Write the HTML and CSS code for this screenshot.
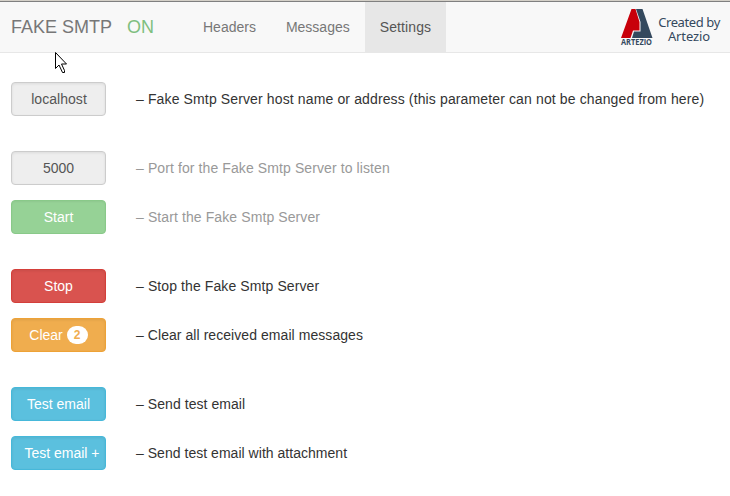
FILE: index.html
```html
<!DOCTYPE html>
<html lang="en">
<head>
<meta charset="utf-8">
<title>Fake SMTP - Settings</title>
<link rel="stylesheet" href="styles.css">
</head>
<body>
<header class="navbar">
  <div class="brand">FAKE SMTP</div>
  <div class="status">ON</div>
  <nav class="nav">
    <a class="nav-item">Headers</a>
    <a class="nav-item">Messages</a>
    <a class="nav-item active">Settings</a>
  </nav>
  <div class="credit">
    <svg class="logo" width="34" height="38" viewBox="0 0 34 38">
      <path fill="#c8000a" d="M11.500 1h4L19.500 14v8.500H13L10.500 30H1z"/>
      <path fill="#34495e" d="M16 1h6.500l10 29H12l2-6.500h6.500V14z"/>
      <text class="logo-text" x="1" y="37.300" textLength="31" lengthAdjust="spacingAndGlyphs">ARTEZIO</text>
    </svg>
    <div class="credit-text"><span>Created by</span><span class="company">Artezio</span></div>
  </div>
</header>
<main class="settings">
  <div class="row gap"><div class="btn field host">localhost</div><p class="spaced">– Fake Smtp Server host name or address (this parameter can not be changed from here)</p></div>
  <div class="row muted"><div class="btn field">5000</div><p class="spaced-md">– Port for the Fake Smtp Server to listen</p></div>
  <div class="row gap muted"><div class="btn success">Start</div><p class="spaced-md">– Start the Fake Smtp Server</p></div>
  <div class="row"><div class="btn danger">Stop</div><p class="spaced-md">– Stop the Fake Smtp Server</p></div>
  <div class="row gap"><div class="btn warning">Clear <span class="badge">2</span></div><p class="spaced-sm">– Clear all received email messages</p></div>
  <div class="row"><div class="btn info">Test email</div><p class="spaced-sm">– Send test email</p></div>
  <div class="row"><div class="btn info plus">Test email +</div><p class="spaced-xs">– Send test email with attachment</p></div>
</main>
<svg class="cursor" width="13" height="22" viewBox="0 0 13 22">
  <path fill="#fff" stroke="#000" d="M.5.500v16l3.500-3.500 3.500 7.500h2v-2l-3-6.500h5z"/>
</svg>
</body>
</html>
```
FILE: styles.css
```css
* { box-sizing: border-box; }
body {
  margin: 0;
  height: 496px;
  overflow: hidden;
  background: #fff;
  border-top: 1px solid #d4d0c8;
  color: #333;
  font: 14px/20px "Liberation Sans", Arial, sans-serif;
}
.navbar {
  display: flex;
  height: 52px;
  padding-left: 11px;
  background: #f8f8f8;
  border-top: 1px solid #808080;
  border-bottom: 1px solid #e7e7e7;
  color: #777;
  line-height: 50px;
}
.brand, .status { font-size: 18px; white-space: nowrap; }
.brand { width: 116px; }
.status { width: 61px; color: #7fbf7f; }
.nav { display: flex; }
.nav-item { padding: 0 15px; }
.nav-item.active { width: 81px; background: #e7e7e7; color: #555; letter-spacing: .1px; }
.credit {
  display: flex;
  margin-left: auto;
  width: 110px;
  padding-top: 6px;
}
.logo { flex: none; }
.logo-text { font: bold 8.5px "Open Sans", sans-serif; fill: #34495e; }
.credit-text {
  display: flex;
  flex-direction: column;
  align-items: center;
  width: 64px;
  margin: 7px 0 0 3px;
  color: #34495e;
  font: 13px/14px "Noto Sans", sans-serif;
  letter-spacing: -0.4px;
  white-space: nowrap;
}
.company { letter-spacing: -0.1px; }
.settings { padding: 29px 11px 0; }
.row { display: flex; align-items: center; height: 34px; margin-bottom: 15px; }
.row.gap { margin-bottom: 35px; }
.row p { margin: 0 0 0 30px; white-space: nowrap; }
.row.muted p { color: #999; }
.row .spaced { letter-spacing: .13px; }
.row .spaced-md { letter-spacing: .1px; }
.row .spaced-sm { letter-spacing: .06px; }
.row .spaced-xs { letter-spacing: .03px; }
.btn {
  width: 95px;
  height: 34px;
  padding-top: 6px;
  border: 1px solid;
  border-radius: 4px;
  color: #fff;
  text-align: center;
  white-space: nowrap;
  box-shadow: inset 0 1px 3px rgba(0, 0, 0, .08);
}
.field { background: #eee; border-color: #ccc; color: #555; }
.host { padding-left: 1px; letter-spacing: .05px; }
.success { background: #96d296; border-color: #89c989; box-shadow: inset 0 1px 2px rgba(0, 0, 0, .05); }
.danger { background: #d9534f; border-color: #d43f3a; }
.warning { background: #f0ad4e; border-color: #eea236; }
.info { background: #5bc0de; border-color: #46b8da; }
.plus { padding-left: 7px; }
.badge {
  display: inline-block;
  width: 21px;
  height: 18px;
  border-radius: 10px;
  background: #fff;
  color: #f0ad4e;
  font: bold 12px/18px "Liberation Sans", Arial, sans-serif;
  vertical-align: 1px;
}
.cursor { position: absolute; left: 55px; top: 52px; }
```
